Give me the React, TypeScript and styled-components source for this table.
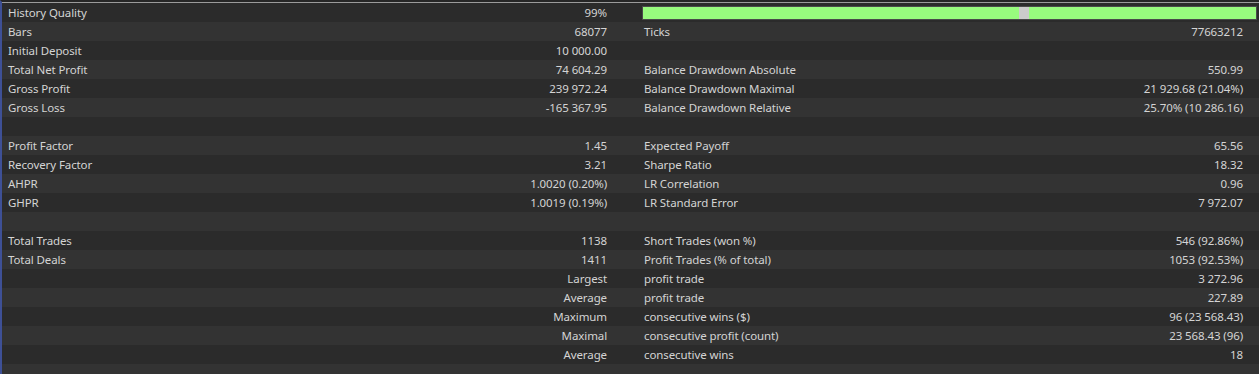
import styled, { createGlobalStyle } from 'styled-components';

const GlobalStyle = createGlobalStyle`
  html, body {
    margin: 0;
    padding: 0;
    background: #2b2b2b;
    overflow: hidden;
  }
`;

const Report = styled.div`
  width: 1259px;
  height: 374px;
  box-sizing: border-box;
  border-left: 2px solid #3e5096;
  border-top: 2px solid #262626;
  background: #2b2b2b;
  font-family: 'Noto Sans', 'Open Sans', sans-serif;
  font-size: 11.5px;
  letter-spacing: -0.1px;
  color: #d4d4d4;
  overflow: hidden;
`;

const TopRule = styled.div`
  height: 1px;
  background: #9b9b9b;
`;

const Row = styled.div<{ $odd: boolean }>`
  display: grid;
  grid-template-columns: 1fr 1fr;
  column-gap: 37px;
  height: 19px;
  padding: 0 16px 0 6px;
  align-items: center;
  background: ${(p) => (p.$odd ? '#333333' : '#2b2b2b')};
`;

const Half = styled.div`
  display: flex;
  justify-content: space-between;
  align-items: center;
  white-space: nowrap;
  line-height: 19px;
`;

const Value = styled.span`
  text-align: right;
`;

const QualityBar = styled.div`
  position: relative;
  height: 14px;
  margin-right: -14px;
  margin-left: -2px;
  box-sizing: border-box;
  border: 1px solid #4a4a4a;
  background: #98fb7e;
`;

const Gap = styled.div`
  position: absolute;
  top: 0;
  bottom: 0;
  left: 376px;
  width: 10px;
  background: #cbcbcb;
`;

type Cell = [string, string];
type Line = { left: Cell; right: Cell | 'bar' };

const lines: Line[] = [
  { left: ['History Quality', '99%'], right: 'bar' },
  { left: ['Bars', '68077'], right: ['Ticks', '77663212'] },
  { left: ['Initial Deposit', '10 000.00'], right: ['', ''] },
  { left: ['Total Net Profit', '74 604.29'], right: ['Balance Drawdown Absolute', '550.99'] },
  { left: ['Gross Profit', '239 972.24'], right: ['Balance Drawdown Maximal', '21 929.68 (21.04%)'] },
  { left: ['Gross Loss', '-165 367.95'], right: ['Balance Drawdown Relative', '25.70% (10 286.16)'] },
  { left: ['', ''], right: ['', ''] },
  { left: ['Profit Factor', '1.45'], right: ['Expected Payoff', '65.56'] },
  { left: ['Recovery Factor', '3.21'], right: ['Sharpe Ratio', '18.32'] },
  { left: ['AHPR', '1.0020 (0.20%)'], right: ['LR Correlation', '0.96'] },
  { left: ['GHPR', '1.0019 (0.19%)'], right: ['LR Standard Error', '7 972.07'] },
  { left: ['', ''], right: ['', ''] },
  { left: ['Total Trades', '1138'], right: ['Short Trades (won %)', '546 (92.86%)'] },
  { left: ['Total Deals', '1411'], right: ['Profit Trades (% of total)', '1053 (92.53%)'] },
  { left: ['', 'Largest'], right: ['profit trade', '3 272.96'] },
  { left: ['', 'Average'], right: ['profit trade', '227.89'] },
  { left: ['', 'Maximum'], right: ['consecutive wins ($)', '96 (23 568.43)'] },
  { left: ['', 'Maximal'], right: ['consecutive profit (count)', '23 568.43 (96)'] },
  { left: ['', 'Average'], right: ['consecutive wins', '18'] },
  { left: ['', ''], right: ['', ''] },
];

function App() {
  return (
    <>
      <GlobalStyle />
      <Report>
        <TopRule />
        {lines.map((line, i) => (
          <Row key={i} $odd={i % 2 === 1}>
            <Half>
              <span>{line.left[0]}</span>
              <Value>{line.left[1]}</Value>
            </Half>
            {line.right === 'bar' ? (
              <QualityBar>
                <Gap />
              </QualityBar>
            ) : (
              <Half>
                <span>{line.right[0]}</span>
                <Value>{line.right[1]}</Value>
              </Half>
            )}
          </Row>
        ))}
      </Report>
    </>
  );
}

export default App;
